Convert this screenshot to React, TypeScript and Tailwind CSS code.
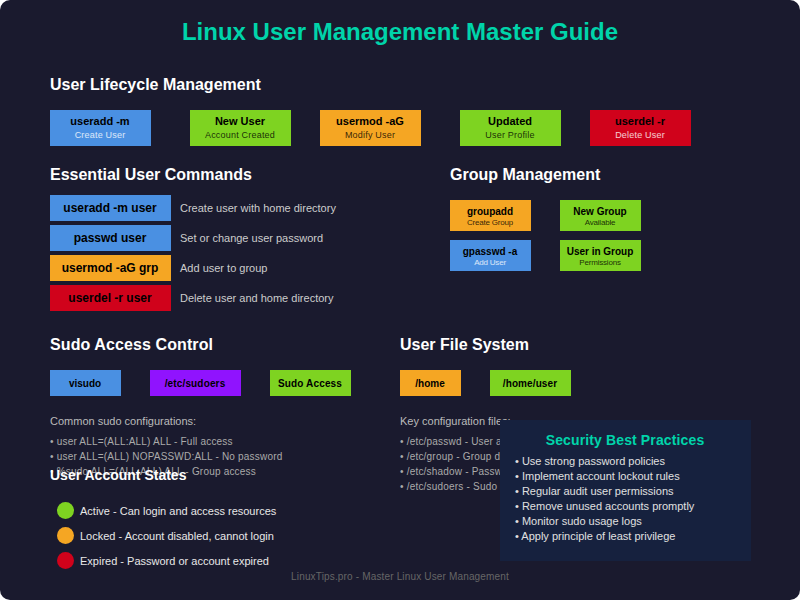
const font = "[font-family:'Liberation_Sans',Arial,sans-serif]";

const H = ({ children, className = "" }: { children: string; className?: string }) => (
  <h2 className={`font-bold text-white leading-[18px] ${className || "text-[16px]"}`}>{children}</h2>
);

function FlowBox(props: { w: string; bg: string; title: string; sub: string; subColor: string; className?: string }) {
  return (
    <div className={`${props.w} h-[36px] ${props.bg} ${props.className ?? ""} shrink-0 flex flex-col items-center pt-[5px] pr-[1px]`}>
      <div className="text-[11px] font-bold text-black leading-[13px]">{props.title}</div>
      <div className={`text-[9px] leading-[13px] mt-[1px] tracking-[0.2px] ${props.subColor}`}>{props.sub}</div>
    </div>
  );
}

function Cmd({ cmd, desc, bg }: { cmd: string; desc: string; bg: string }) {
  return (
    <div className="flex items-center h-[26px]">
      <div className={`w-[121px] h-[26px] ${bg} flex items-center justify-center pr-[1px] text-[12px] font-bold text-black`}>{cmd}</div>
      <div className="ml-[9px] text-[11px] text-[#cccccc]">{desc}</div>
    </div>
  );
}

function GroupBox({ bg, title, sub, subColor }: { bg: string; title: string; sub: string; subColor: string }) {
  return (
    <div className={`w-[81px] h-[31px] ${bg} flex flex-col items-center pt-[6px] pr-[1px]`}>
      <div className="text-[10px] font-bold text-black leading-[11px]">{title}</div>
      <div className={`text-[8px] leading-[9px] mt-[1px] tracking-[-0.2px] ${subColor}`}>{sub}</div>
    </div>
  );
}

function Tag({ w, bg, label, className = "" }: { w: string; bg: string; label: string; className?: string }) {
  return <div className={`${w} ${bg} ${className} h-[26px] shrink-0 flex items-center justify-center pr-[1px] text-[10px] font-bold text-black`}>{label}</div>;
}

function State({ color, label }: { color: string; label: string }) {
  return (
    <div className="flex items-center h-[17px] ml-[7px]">
      <span className={`w-[17px] h-[17px] rounded-full ${color}`} />
      <span className="ml-[6px] pt-[1px] text-[11px] text-[#e8e8e8]">{label}</span>
    </div>
  );
}

function Lines({ head, lines }: { head: string; lines: string[] }) {
  return (
    <div className="mt-[19px] text-[10px] text-[#aaaaaa] whitespace-nowrap">
      <div className="leading-[12px] text-[11px] text-[#bbbbbb]">{head}</div>
      <div className="mt-[7px] flex flex-col tracking-[0.2px]">
        {lines.map((l) => (
          <div key={l} className="leading-[15px] h-[15px]">• {l}</div>
        ))}
      </div>
    </div>
  );
}

export default function App() {
  return (
    <div className={`relative w-[800px] h-[600px] bg-white overflow-hidden ${font}`}>
      <div className="relative h-full rounded-[10px] bg-[#1a1a2e] px-[50px] flex flex-col">
        <h1 className="mt-[18px] h-[28px] text-center text-[24px] leading-[28px] font-bold text-[#00d4aa]">Linux User Management Master Guide</h1>

        <H className="text-[16px] mt-[30px]">User Lifecycle Management</H>
        <div className="mt-[16px] flex">
          <FlowBox w="w-[101px]" bg="bg-[#4a90e2]" title="useradd -m" sub="Create User" subColor="text-white/80" />
          <FlowBox w="w-[101px]" bg="bg-[#7ed321]" title="New User" sub="Account Created" subColor="text-black/80" className="ml-[39px]" />
          <FlowBox w="w-[101px]" bg="bg-[#f5a623]" title="usermod -aG" sub="Modify User" subColor="text-black/80" className="ml-[29px]" />
          <FlowBox w="w-[101px]" bg="bg-[#7ed321]" title="Updated" sub="User Profile" subColor="text-black/80" className="ml-[39px]" />
          <FlowBox w="w-[101px]" bg="bg-[#d0021b]" title="userdel -r" sub="Delete User" subColor="text-white/80" className="ml-[29px]" />
        </div>

        <div className="mt-[20px] flex h-[160px]">
          <div className="w-[400px]">
            <H>Essential User Commands</H>
            <div className="mt-[11px] flex flex-col gap-[4px]">
              <Cmd cmd="useradd -m user" desc="Create user with home directory" bg="bg-[#4a90e2]" />
              <Cmd cmd="passwd user" desc="Set or change user password" bg="bg-[#4a90e2]" />
              <Cmd cmd="usermod -aG grp" desc="Add user to group" bg="bg-[#f5a623]" />
              <Cmd cmd="userdel -r user" desc="Delete user and home directory" bg="bg-[#d0021b]" />
            </div>
          </div>
          <div>
            <H>Group Management</H>
            <div className="mt-[16px] grid grid-cols-[81px_81px] gap-x-[29px] gap-y-[9px]">
              <GroupBox bg="bg-[#f5a623]" title="groupadd" sub="Create Group" subColor="text-black/80" />
              <GroupBox bg="bg-[#7ed321]" title="New Group" sub="Available" subColor="text-black/80" />
              <GroupBox bg="bg-[#4a90e2]" title="gpasswd -a" sub="Add User" subColor="text-white/80" />
              <GroupBox bg="bg-[#7ed321]" title="User in Group" sub="Permissions" subColor="text-black/80" />
            </div>
          </div>
        </div>

        <div className="mt-[10px] flex h-[130px]">
          <div className="w-[350px]">
            <H className="text-[16px] tracking-[0.1px]">Sudo Access Control</H>
            <div className="mt-[16px] flex">
              <Tag w="w-[71px]" bg="bg-[#4a90e2]" label="visudo" />
              <Tag w="w-[91px]" bg="bg-[#9013fe]" label="/etc/sudoers" className="ml-[29px] tracking-[0.15px]" />
              <Tag w="w-[81px]" bg="bg-[#7ed321]" label="Sudo Access" className="ml-[29px] tracking-[0.15px]" />
            </div>
            <Lines head="Common sudo configurations:" lines={["user ALL=(ALL:ALL) ALL - Full access", "user ALL=(ALL) NOPASSWD:ALL - No password", "%sudo ALL=(ALL:ALL) ALL - Group access"]} />
          </div>
          <div>
            <H>User File System</H>
            <div className="mt-[16px] flex">
              <Tag w="w-[61px]" bg="bg-[#f5a623]" label="/home" />
              <Tag w="w-[81px]" bg="bg-[#7ed321]" label="/home/user" className="ml-[29px] tracking-[0.1px]" />
            </div>
            <Lines head="Key configuration files:" lines={["/etc/passwd - User account info", "/etc/group - Group definitions", "/etc/shadow - Password hashes", "/etc/sudoers - Sudo configuration"]} />
          </div>
        </div>

        <H className="text-[14px]">User Account States</H>
        <div className="mt-[18px] flex flex-col gap-[8px]">
          <State color="bg-[#7ed321]" label="Active - Can login and access resources" />
          <State color="bg-[#f5a623]" label="Locked - Account disabled, cannot login" />
          <State color="bg-[#d0021b]" label="Expired - Password or account expired" />
        </div>
        <div className="mt-[2px] text-center text-[10px] leading-[12px] tracking-[0.16px] text-[#666666]">LinuxTips.pro - Master Linux User Management</div>

        <div className="absolute left-[500px] top-[420px] w-[251px] h-[141px] bg-[#16213e] pt-[11px]">
          <div className="text-center text-[14px] leading-[18px] font-bold tracking-[0.13px] pr-[1px] text-[#00d4aa]">Security Best Practices</div>
          <ul className="mt-[5px] ml-[15px] text-[11px] text-[#e0e0e0]">
            {["Use strong password policies", "Implement account lockout rules", "Regular audit user permissions", "Remove unused accounts promptly", "Monitor sudo usage logs", "Apply principle of least privilege"].map((t) => (
              <li key={t} className="h-[15px] leading-[15px]">• {t}</li>
            ))}
          </ul>
        </div>
      </div>
    </div>
  );
}
